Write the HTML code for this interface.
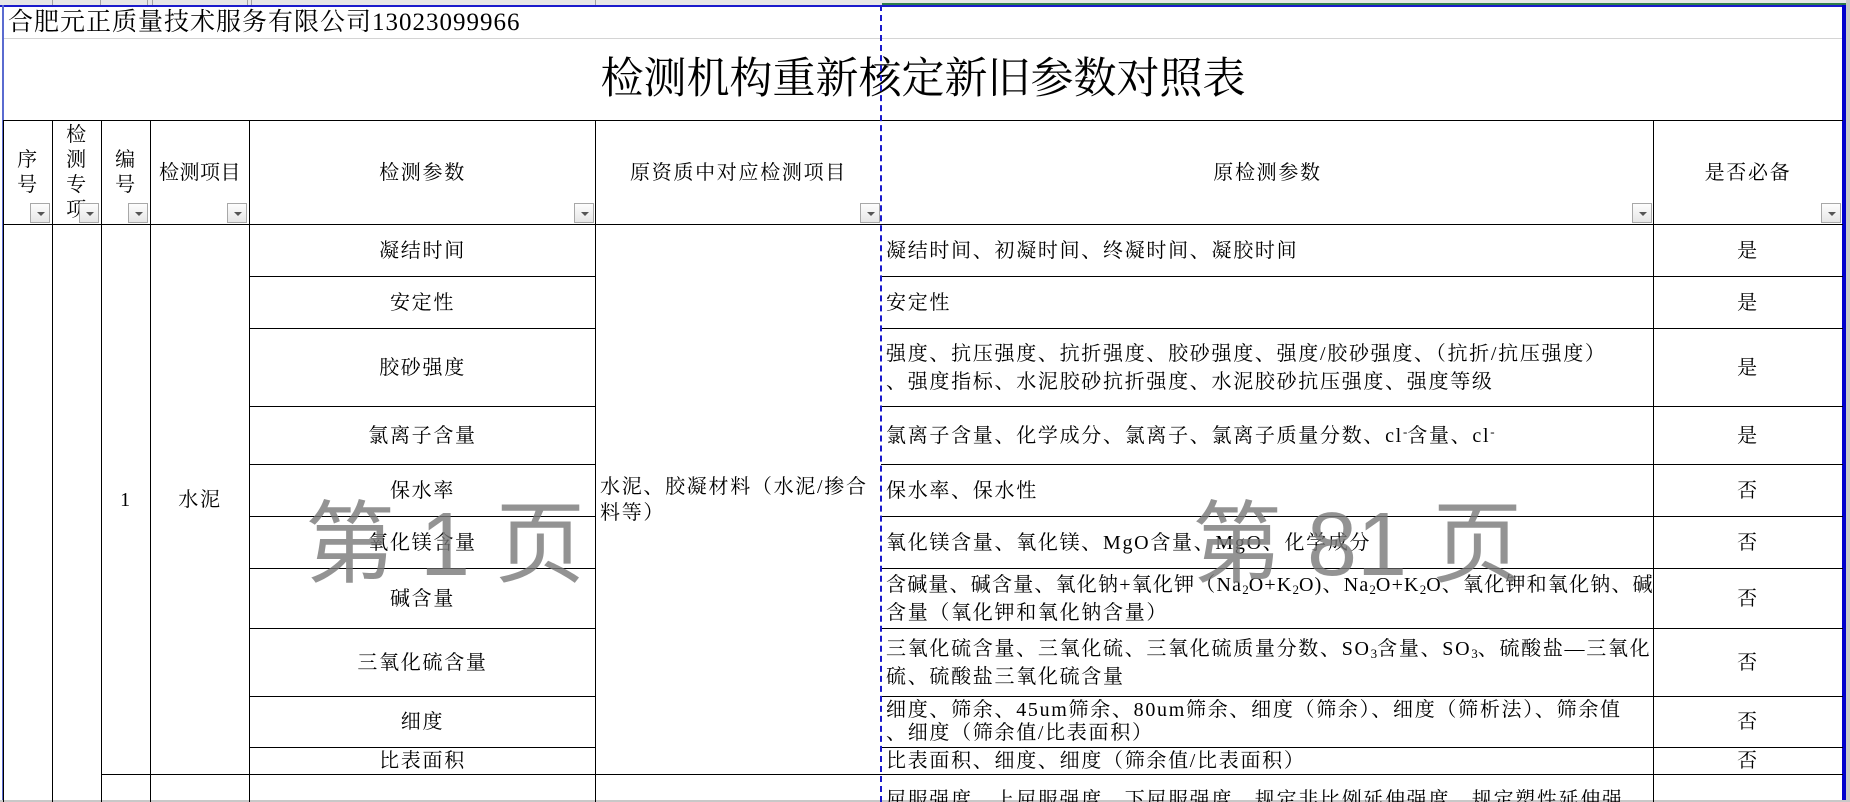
<!DOCTYPE html>
<html><head><meta charset="utf-8">
<style>
*{margin:0;padding:0;box-sizing:border-box}
html,body{width:1850px;height:802px;overflow:hidden;background:#fff}
body{position:relative;font-family:"Liberation Serif","Noto Serif CJK SC",serif;font-size:20px;color:#000;letter-spacing:1.7px}
.l{position:absolute;background:#000}
.c{position:absolute;display:flex;align-items:center;justify-content:center;text-align:center;line-height:26px;white-space:nowrap}
.lt{position:absolute;display:flex;align-items:center;line-height:26px;white-space:nowrap}
.btn{position:absolute;width:20px;height:20px;border:1px solid #a8a8a8;background:linear-gradient(#fdfdfd,#e6e6e6)}
.btn:after{content:"";position:absolute;left:6px;top:8px;border-left:4px solid transparent;border-right:4px solid transparent;border-top:4px solid #555}
.wm{position:absolute;font-family:"Liberation Sans","Noto Sans CJK SC",sans-serif;font-size:90px;line-height:90px;color:rgba(120,120,120,0.8);letter-spacing:0;white-space:pre}
sub{font-size:13px;vertical-align:-3px;letter-spacing:0;line-height:0}
sup{font-size:13px;vertical-align:6px;letter-spacing:0;line-height:0}
</style></head><body>
<div style="position:absolute;left:0;top:0;width:1850px;height:5px;background:#e6e6e6"></div>
<div class="l" style="left:52px;top:0;width:1px;height:5px;background:#a0a0a0"></div>
<div class="l" style="left:100px;top:0;width:1px;height:5px;background:#a0a0a0"></div>
<div class="l" style="left:147px;top:0;width:1px;height:5px;background:#a0a0a0"></div>
<div class="l" style="left:152px;top:0;width:1px;height:5px;background:#a0a0a0"></div>
<div class="l" style="left:247px;top:0;width:1px;height:5px;background:#a0a0a0"></div>
<div class="l" style="left:251px;top:0;width:1px;height:5px;background:#a0a0a0"></div>
<div class="l" style="left:595px;top:0;width:1px;height:5px;background:#a0a0a0"></div>
<div class="l" style="left:882px;top:3px;width:968px;height:2px;background:#2e7d4a"></div>
<div class="l" style="left:0;top:5px;width:1845px;height:2px;background:#1a1acc"></div>
<div class="l" style="left:2px;top:5px;width:2px;height:797px;background:#5a6bd0"></div>
<div class="l" style="left:1842px;top:5px;width:4px;height:797px;background:#0000cc"></div>
<div style="position:absolute;left:1846px;top:0;width:4px;height:802px;background:#c8c8c8"></div>
<div style="position:absolute;left:0;top:800px;width:1850px;height:2px;background:#c8c8c8"></div>

<div style="position:absolute;left:8px;top:8px;font-size:25px;line-height:30px;letter-spacing:1px;white-space:nowrap">合肥元正质量技术服务有限公司13023099966</div>
<div class="l" style="left:4px;top:38px;width:1838px;height:1px;background:#d4d4d4"></div>
<div class="c" style="left:4px;top:39px;width:1838px;height:81px;font-size:43px;letter-spacing:0;line-height:50px">检测机构重新核定新旧参数对照表</div>

<div class="l" style="left:3px;top:120px;width:1840px;height:1px"></div>
<div class="l" style="left:3px;top:224px;width:1840px;height:1px"></div>
<div class="l" style="left:249px;top:276px;width:346px;height:1px"></div><div class="l" style="left:881px;top:276px;width:962px;height:1px"></div>
<div class="l" style="left:249px;top:328px;width:346px;height:1px"></div><div class="l" style="left:881px;top:328px;width:962px;height:1px"></div>
<div class="l" style="left:249px;top:406px;width:346px;height:1px"></div><div class="l" style="left:881px;top:406px;width:962px;height:1px"></div>
<div class="l" style="left:249px;top:464px;width:346px;height:1px"></div><div class="l" style="left:881px;top:464px;width:962px;height:1px"></div>
<div class="l" style="left:249px;top:516px;width:346px;height:1px"></div><div class="l" style="left:881px;top:516px;width:962px;height:1px"></div>
<div class="l" style="left:249px;top:568px;width:346px;height:1px"></div><div class="l" style="left:881px;top:568px;width:962px;height:1px"></div>
<div class="l" style="left:249px;top:628px;width:346px;height:1px"></div><div class="l" style="left:881px;top:628px;width:962px;height:1px"></div>
<div class="l" style="left:249px;top:696px;width:346px;height:1px"></div><div class="l" style="left:881px;top:696px;width:962px;height:1px"></div>
<div class="l" style="left:249px;top:747px;width:346px;height:1px"></div><div class="l" style="left:881px;top:747px;width:962px;height:1px"></div>
<div class="l" style="left:101px;top:774px;width:1742px;height:1px"></div>

<div class="l" style="left:3px;top:120px;width:1px;height:682px"></div>
<div class="l" style="left:52px;top:120px;width:1px;height:682px"></div>
<div class="l" style="left:101px;top:120px;width:1px;height:682px"></div>
<div class="l" style="left:150px;top:120px;width:1px;height:682px"></div>
<div class="l" style="left:249px;top:120px;width:1px;height:682px"></div>
<div class="l" style="left:595px;top:120px;width:1px;height:682px"></div>
<div class="l" style="left:1653px;top:120px;width:1px;height:682px"></div>

<div class="c" style="left:4px;top:121px;width:48px;height:103px;line-height:25px"><div>序<br>号</div></div>
<div style="position:absolute;left:53px;top:123px;width:48px;height:101px;overflow:hidden;text-align:center;line-height:25px">检<br>测<br>专<br>项</div>
<div class="c" style="left:102px;top:121px;width:48px;height:103px;line-height:25px"><div>编<br>号</div></div>
<div class="c" style="left:151px;top:121px;width:98px;height:103px;letter-spacing:0.5px">检测项目</div>
<div class="c" style="left:250px;top:121px;width:345px;height:103px">检测参数</div>
<div class="c" style="left:596px;top:121px;width:285px;height:103px">原资质中对应检测项目</div>
<div class="c" style="left:882px;top:121px;width:771px;height:103px">原检测参数</div>
<div class="c" style="left:1654px;top:121px;width:188px;height:103px">是否必备</div>
<div class="btn" style="left:30px;top:203px"></div>
<div class="btn" style="left:79px;top:203px"></div>
<div class="btn" style="left:128px;top:203px"></div>
<div class="btn" style="left:227px;top:203px"></div>
<div class="btn" style="left:574px;top:203px"></div>
<div class="btn" style="left:860px;top:203px"></div>
<div class="btn" style="left:1632px;top:203px"></div>
<div class="btn" style="left:1821px;top:203px"></div>

<div class="c" style="left:102px;top:225px;width:48px;height:549px">1</div>
<div class="c" style="left:151px;top:225px;width:98px;height:549px">水泥</div>
<div class="lt" style="left:600px;top:225px;width:280px;height:549px"><div>水泥、胶凝材料（水泥/掺合<br>料等）</div></div>

<div class="c" style="left:250px;top:225px;width:345px;height:51px">凝结时间</div>
<div class="c" style="left:250px;top:277px;width:345px;height:51px">安定性</div>
<div class="c" style="left:250px;top:329px;width:345px;height:77px">胶砂强度</div>
<div class="c" style="left:250px;top:407px;width:345px;height:57px">氯离子含量</div>
<div class="c" style="left:250px;top:465px;width:345px;height:51px">保水率</div>
<div class="c" style="left:250px;top:517px;width:345px;height:51px">氧化镁含量</div>
<div class="c" style="left:250px;top:569px;width:345px;height:59px">碱含量</div>
<div class="c" style="left:250px;top:629px;width:345px;height:67px">三氧化硫含量</div>
<div class="c" style="left:250px;top:697px;width:345px;height:50px">细度</div>
<div class="c" style="left:250px;top:748px;width:345px;height:26px">比表面积</div>

<div class="lt" style="left:886px;top:225px;height:51px"><div>凝结时间、初凝时间、终凝时间、凝胶时间</div></div>
<div class="lt" style="left:886px;top:277px;height:51px"><div>安定性</div></div>
<div class="lt" style="left:886px;top:329px;height:77px;line-height:28px"><div>强度、抗压强度、抗折强度、胶砂强度、强度/胶砂强度、（抗折/抗压强度）<br>、强度指标、水泥胶砂抗折强度、水泥胶砂抗压强度、强度等级</div></div>
<div class="lt" style="left:886px;top:407px;height:57px"><div>氯离子含量、化学成分、氯离子、氯离子质量分数、cl<sup>-</sup>含量、cl<sup>-</sup></div></div>
<div class="lt" style="left:886px;top:465px;height:51px"><div>保水率、保水性</div></div>
<div class="lt" style="left:886px;top:517px;height:51px"><div>氧化镁含量、氧化镁、MgO含量、MgO、化学成分</div></div>
<div class="lt" style="left:886px;top:569px;height:59px;line-height:28px;letter-spacing:1.2px"><div>含碱量、碱含量、氧化钠+氧化钾（Na<sub>2</sub>O+K<sub>2</sub>O)、Na<sub>2</sub>O+K<sub>2</sub>O、氧化钾和氧化钠、碱<br><span style="letter-spacing:1.7px">含量（氧化钾和氧化钠含量）</span></div></div>
<div class="lt" style="left:886px;top:629px;height:67px;line-height:28px"><div>三氧化硫含量、三氧化硫、三氧化硫质量分数、SO<sub>3</sub>含量、SO<sub>3</sub>、硫酸盐—三氧化<br>硫、硫酸盐三氧化硫含量</div></div>
<div class="lt" style="left:886px;top:697px;height:50px;line-height:23px"><div>细度、筛余、45um筛余、80um筛余、细度（筛余）、细度（筛析法）、筛余值<br>、细度（筛余值/比表面积）</div></div>
<div class="lt" style="left:886px;top:748px;height:26px"><div>比表面积、细度、细度（筛余值/比表面积）</div></div>
<div style="position:absolute;left:886px;top:787px;line-height:26px;white-space:nowrap">屈服强度、上屈服强度、下屈服强度、规定非比例延伸强度、规定塑性延伸强</div>

<div class="c" style="left:1654px;top:225px;width:188px;height:51px">是</div>
<div class="c" style="left:1654px;top:277px;width:188px;height:51px">是</div>
<div class="c" style="left:1654px;top:329px;width:188px;height:77px">是</div>
<div class="c" style="left:1654px;top:407px;width:188px;height:57px">是</div>
<div class="c" style="left:1654px;top:465px;width:188px;height:51px">否</div>
<div class="c" style="left:1654px;top:517px;width:188px;height:51px">否</div>
<div class="c" style="left:1654px;top:569px;width:188px;height:59px">否</div>
<div class="c" style="left:1654px;top:629px;width:188px;height:67px">否</div>
<div class="c" style="left:1654px;top:697px;width:188px;height:50px">否</div>
<div class="c" style="left:1654px;top:748px;width:188px;height:26px">否</div>

<div style="position:absolute;left:880px;top:5px;width:0;height:797px;border-left:2px dashed #1a1acc"></div>

<div class="wm" style="left:305px;top:500px">第 1 页</div>
<div class="wm" style="left:1192px;top:500px">第 81 页</div>
</body></html>
